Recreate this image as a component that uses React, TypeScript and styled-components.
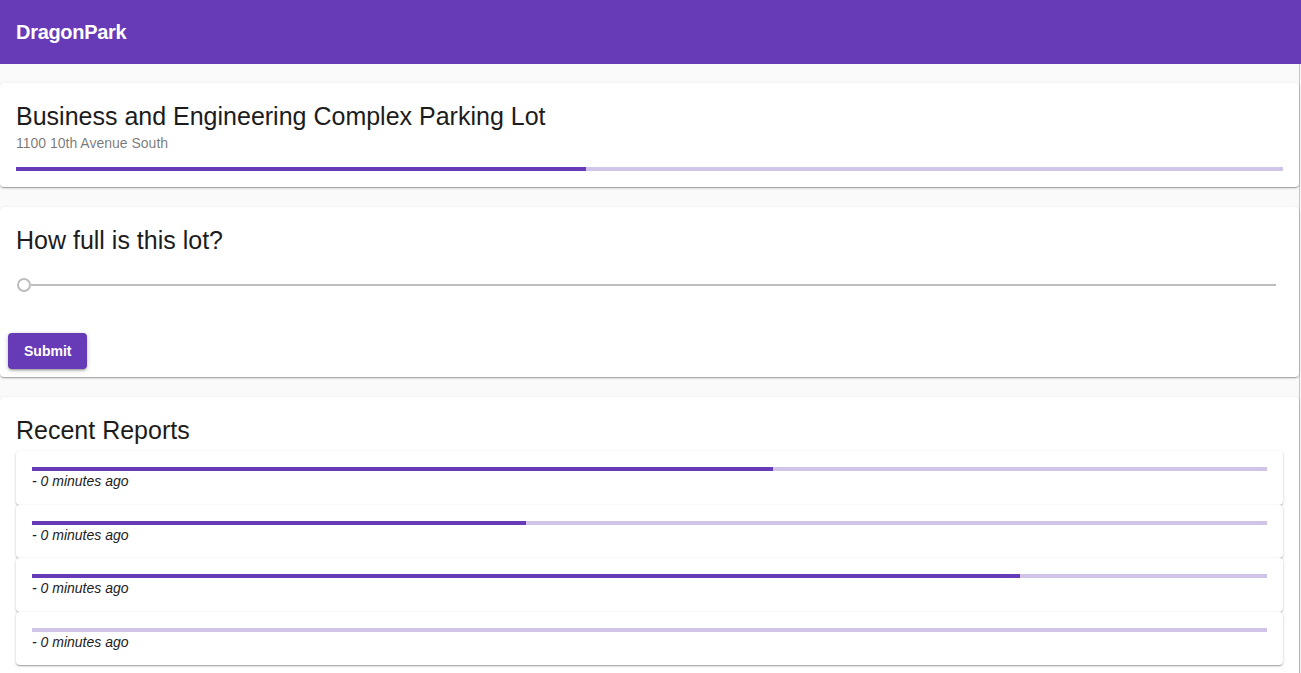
import React from 'react';
import styled, { createGlobalStyle } from 'styled-components';

const GlobalStyle = createGlobalStyle`
  html, body {
    margin: 0;
    padding: 0;
    background: #fafafa;
    font-family: "Liberation Sans", Arial, Helvetica, sans-serif;
    color: rgba(0, 0, 0, 0.87);
  }
  * {
    box-sizing: border-box;
  }
`;

const purple = '#673ab7';
const lightPurple = '#d1c4e9';

const AppBar = styled.header`
  height: 64px;
  background: ${purple};
  display: flex;
  align-items: center;
  padding: 0 16px;
`;

const Brand = styled.div`
  color: #fff;
  font-size: 20px;
  font-weight: 700;
  letter-spacing: -0.3px;
`;

const Main = styled.main`
  display: flex;
  flex-direction: column;
  gap: 20px;
  padding-top: 19px;
  border-right: 1px solid #c4c4c4;
  margin-right: 1px;
`;

const Card = styled.section`
  background: #fff;
  border-radius: 4px;
  box-shadow: 0 1px 3px 0 rgba(0, 0, 0, 0.2), 0 1px 1px 0 rgba(0, 0, 0, 0.14),
    0 2px 1px -1px rgba(0, 0, 0, 0.12);
`;

const CardContent = styled.div<{ $bottom?: number }>`
  padding: 16px 16px ${(p) => (p.$bottom ?? 16)}px;
`;

const Heading = styled.h2`
  margin: 0;
  font-size: 25px;
  font-weight: 400;
  line-height: 34px;
  color: #1c1c1c;
`;

const Subtitle = styled.div`
  font-size: 14px;
  line-height: 20px;
  color: rgba(0, 0, 0, 0.54);
`;

const BarTrack = styled.div<{ $top?: number }>`
  height: 4px;
  background: ${lightPurple};
  margin-top: ${(p) => p.$top ?? 0}px;
  overflow: hidden;
`;

const BarFill = styled.div`
  height: 100%;
  background: ${purple};
`;

const SliderRow = styled.div`
  display: flex;
  align-items: center;
  height: 14px;
  margin-top: 21px;
  padding: 0 7px 0 1px;
`;

const Thumb = styled.div`
  width: 14px;
  height: 14px;
  border-radius: 50%;
  border: 2px solid #bdbdbd;
  background: #fff;
  flex: none;
`;

const SliderTrack = styled.div`
  flex: 1;
  height: 2px;
  background: #bdbdbd;
`;

const Actions = styled.div`
  display: flex;
  padding: 41px 8px 8px;
`;

const Button = styled.button`
  height: 36px;
  padding: 0 16px;
  border: none;
  border-radius: 4px;
  background: ${purple};
  color: #fff;
  font-family: inherit;
  font-size: 14px;
  font-weight: 700;
  cursor: pointer;
  box-shadow: 0 1px 5px 0 rgba(0, 0, 0, 0.2), 0 2px 2px 0 rgba(0, 0, 0, 0.14),
    0 3px 1px -2px rgba(0, 0, 0, 0.12);
`;

const ReportList = styled.div`
  display: flex;
  flex-direction: column;
  margin-top: 4px;
`;

const ReportItem = styled.div`
  background: #fff;
  border-radius: 4px;
  padding: 16px 16px 13px;
  height: 53.5px;
  box-shadow: 0 1px 3px 0 rgba(0, 0, 0, 0.2), 0 1px 1px 0 rgba(0, 0, 0, 0.14),
    0 2px 1px -1px rgba(0, 0, 0, 0.12);
`;

const ReportTime = styled.div`
  font-size: 14px;
  line-height: 20px;
  font-style: italic;
  color: #1c1c1c;
`;

interface Report {
  fullness: number;
  minutesAgo: number;
}

const reports: Report[] = [
  { fullness: 60, minutesAgo: 0 },
  { fullness: 40, minutesAgo: 0 },
  { fullness: 80, minutesAgo: 0 },
  { fullness: 0, minutesAgo: 0 },
];

const Progress = ({ value, top }: { value: number; top?: number }) => (
  <BarTrack $top={top}>
    <BarFill style={{ width: `${value}%` }} />
  </BarTrack>
);

const App = () => (
  <>
    <GlobalStyle />
    <AppBar>
      <Brand>DragonPark</Brand>
    </AppBar>
    <Main>
      <Card>
        <CardContent>
          <Heading>Business and Engineering Complex Parking Lot</Heading>
          <Subtitle>1100 10th Avenue South</Subtitle>
          <Progress value={45} top={14} />
        </CardContent>
      </Card>

      <Card>
        <CardContent $bottom={0}>
          <Heading>How full is this lot?</Heading>
          <SliderRow>
            <Thumb />
            <SliderTrack />
          </SliderRow>
        </CardContent>
        <Actions>
          <Button type="button">Submit</Button>
        </Actions>
      </Card>

      <Card>
        <CardContent>
          <Heading>Recent Reports</Heading>
          <ReportList>
            {reports.map((r, i) => (
              <ReportItem key={i}>
                <Progress value={r.fullness} />
                <ReportTime>- {r.minutesAgo} minutes ago</ReportTime>
              </ReportItem>
            ))}
          </ReportList>
        </CardContent>
      </Card>
    </Main>
  </>
);

export default App;
